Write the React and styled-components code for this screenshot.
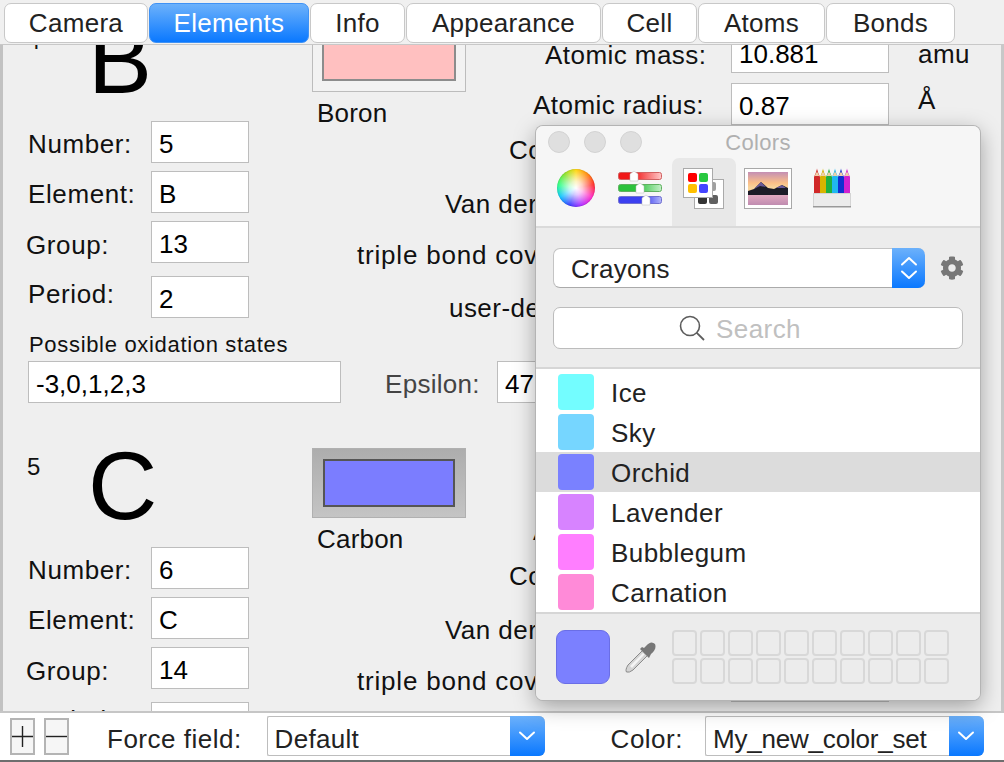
import React from "react"
import styled, {createGlobalStyle} from "styled-components"
import {FaCog} from "react-icons/fa"

const GlobalStyle = createGlobalStyle`
    html, body {
        margin: 0;
        height: 100%;
        overflow: hidden;
        background: #efefef;
    }
    * {
        box-sizing: border-box;
    }
`

const TABS = [
    {name: "Camera", width: 144},
    {name: "Elements", width: 160, active: true},
    {name: "Info", width: 95},
    {name: "Appearance", width: 195},
    {name: "Cell", width: 95},
    {name: "Atoms", width: 127},
    {name: "Bonds", width: 129},
]

const ELEMENTS = [
    {
        index: 4, symbol: "B", name: "Boron", color: "#ffc0c0", number: 5, group: 13, period: 2,
        mass: "10.881", radius: "0.87", oxidation: "-3,0,1,2,3", epsilon: "47.8",
    },
    {
        index: 5, symbol: "C", name: "Carbon", color: "#7b7dff", number: 6, group: 14, period: 2, selected: true,
        mass: "12.011", radius: "0.67", oxidation: "-4,-3,-2,-1,0,1,2,3,4", epsilon: "51.2",
    },
]

const CRAYONS = [
    {name: "Ice", color: "#73fdff"},
    {name: "Sky", color: "#76d6ff"},
    {name: "Orchid", color: "#7a81ff", active: true},
    {name: "Lavender", color: "#d783ff"},
    {name: "Bubblegum", color: "#ff7eff"},
    {name: "Carnation", color: "#ff8ad8"},
]

const Chevron = ({up}) => (
    <svg width="18" height="10" viewBox="0 0 18 10">
        <path d={up ? "M2 8.5 L9 2 L16 8.5" : "M2 1.5 L9 8 L16 1.5"} fill="none" stroke="#fff" strokeWidth="2" strokeLinecap="round" strokeLinejoin="round" />
    </svg>
)

const SlidersIcon = () => (
    <svg width="44" height="38" viewBox="0 0 44 38">
        <defs>
            <linearGradient id="redBar"><stop offset="0.35" stopColor="#f01818" /><stop offset="1" stopColor="#ffc8c8" /></linearGradient>
            <linearGradient id="greenBar"><stop offset="0.45" stopColor="#2cc23c" /><stop offset="1" stopColor="#c4f0c8" /></linearGradient>
            <linearGradient id="blueBar"><stop offset="0.6" stopColor="#3c40f0" /><stop offset="1" stopColor="#b4b8fa" /></linearGradient>
        </defs>
        <rect x="0.5" y="4.5" width="43" height="7" rx="2" fill="url(#redBar)" stroke="#d06060" />
        <rect x="0.5" y="16.5" width="43" height="7" rx="2" fill="url(#greenBar)" stroke="#60b060" />
        <rect x="0.5" y="28.5" width="43" height="7" rx="2" fill="url(#blueBar)" stroke="#7070d0" />
        <path d="M12 6 L16 3 L20 6 V13 H12 Z" fill="#fff" stroke="#bbb" strokeWidth="0.5" />
        <path d="M18 18 L22 15 L26 18 V25 H18 Z" fill="#fff" stroke="#bbb" strokeWidth="0.5" />
        <path d="M24 30 L28 27 L32 30 V37 H24 Z" fill="#fff" stroke="#bbb" strokeWidth="0.5" />
    </svg>
)

const PalettesIcon = () => (
    <svg width="42" height="42" viewBox="0 0 42 42">
        <rect x="11.5" y="11.5" width="29" height="29" fill="#fff" stroke="#aaa" />
        <rect x="24" y="14" width="9" height="9" rx="2" fill="#a0a0a0" />
        <rect x="15" y="27" width="9" height="9" rx="2" fill="#333" />
        <rect x="26" y="27" width="9" height="9" rx="2" fill="#606060" />
        <rect x="0.5" y="0.5" width="29" height="29" fill="#fff" stroke="#aaa" />
        <rect x="5" y="5" width="9" height="9" rx="2" fill="#ff0000" />
        <rect x="16" y="5" width="9" height="9" rx="2" fill="#28c840" />
        <rect x="5" y="16" width="9" height="9" rx="2" fill="#ffc000" />
        <rect x="16" y="16" width="9" height="9" rx="2" fill="#4444ff" />
    </svg>
)

const PictureIcon = () => (
    <svg width="48" height="41" viewBox="0 0 48 41">
        <defs>
            <linearGradient id="sunset" x2="0" y2="1">
                <stop offset="0" stopColor="#c48fb4" />
                <stop offset="0.5" stopColor="#fcc088" />
                <stop offset="0.7" stopColor="#f8d49c" />
            </linearGradient>
            <linearGradient id="lake" x2="0" y2="1">
                <stop offset="0" stopColor="#e0a8c0" />
                <stop offset="1" stopColor="#c08cb0" />
            </linearGradient>
        </defs>
        <rect x="0.5" y="0.5" width="47" height="40" fill="#fff" stroke="#a8a8a8" />
        <rect x="4" y="4" width="40" height="22" fill="url(#sunset)" />
        <rect x="4" y="27" width="40" height="10" fill="url(#lake)" />
        <path d="M4 23 L10 21 L17 14 L24 20 L30 21 L38 17 L44 20 V27 H4 Z" fill="#1c1c28" />
        <path d="M10 21 L17 14 L22 19 L16 18 Z M32 20 L38 17 L42 20 Z" fill="#6a5a98" />
    </svg>
)

const PENCILS = ["#d02828", "#d8b400", "#20b040", "#20b8f0", "#1030d0", "#d020d0"]

const PencilsIcon = () => (
    <svg width="38" height="40" viewBox="0 0 38 40">
        {PENCILS.map((color, i) => (
            <g key={color} transform={`translate(${1 + i * 6} 0)`}>
                <path d="M0 9 L3 2 L6 9 V27 H0 Z" fill={color} />
                <path d="M0.8 8 L3 2.5 L5.2 8 Z" fill="#f0d0a8" />
                <path d="M2.2 4.4 L3 0.5 L3.8 4.4 Z" fill={color} />
            </g>
        ))}
        <rect x="0.5" y="25.5" width="37" height="13" fill="#ebebeb" stroke="#d4d4d4" />
        <rect x="0" y="38" width="38" height="1.5" fill="#999" />
    </svg>
)

const SearchIcon = () => (
    <svg width="26" height="26" viewBox="0 0 26 26">
        <circle cx="11" cy="11" r="9.5" fill="none" stroke="#5c5c5c" strokeWidth="1.6" />
        <path d="M17.8 17.8 L25 25" stroke="#5c5c5c" strokeWidth="1.8" />
    </svg>
)

const DropperIcon = () => (
    <svg width="32" height="32" viewBox="0 0 32 32">
        <path d="M18 9 L23 14 L8 29 Q4 32 1.5 31 Q0 29 3 24 Z" fill="#d4d4d4" stroke="#8a8a8a" />
        <path d="M5 25 L18 12 L19.5 13.5 L7 27 Z" fill="#f4f4f4" />
        <path d="M15 8 L24 17 L26 13 Q32 8 30 3 Q26 -1 21 5 L19 7 L17 6 Z" fill="#777" />
    </svg>
)

const ElementCard = ({element}) => (
    <Card>
        <TopRegion>
            <LeftColumn>
                <Head>
                    <AtomIndex>{element.index}</AtomIndex>
                    <AtomSymbol>{element.symbol}</AtomSymbol>
                </Head>
                <FieldRow>
                    <FieldLabel $down={1}>Number:</FieldLabel>
                    <ShortInput readOnly value={element.number} />
                </FieldRow>
                <FieldRow $top={8}>
                    <FieldLabel>Element:</FieldLabel>
                    <ShortInput readOnly value={element.symbol} />
                </FieldRow>
                <FieldRow $top={8}>
                    <FieldLabel $left={-2} $down={3}>Group:</FieldLabel>
                    <ShortInput readOnly value={element.group} />
                </FieldRow>
                <FieldRow $top={12}>
                    <FieldLabel $down={-8}>Period:</FieldLabel>
                    <ShortInput readOnly value={element.period} />
                </FieldRow>
            </LeftColumn>
            <RightColumn>
                <TopPart>
                    <SwatchBlock>
                        <Swatch $selected={element.selected}>
                            <SwatchFill $color={element.color} $selected={element.selected} />
                        </Swatch>
                        <ElementName>{element.name}</ElementName>
                    </SwatchBlock>
                    <AtomicRows>
                        <ValueRow $labelWidth={265} $indent={79} $drop={7}>
                            <span>Atomic mass:</span>
                            <ValueInput readOnly value={element.mass} />
                            <Unit>amu</Unit>
                        </ValueRow>
                        <ValueRow $labelWidth={265} $indent={67} $top={10} $drop={3}>
                            <span>Atomic radius:</span>
                            <ValueInput readOnly value={element.radius} />
                            <Unit $raised>Å</Unit>
                        </ValueRow>
                    </AtomicRows>
                </TopPart>
                <ValueRow $labelWidth={419} $indent={197} $top={4} $drop={1}>
                    <span>Covalent radius:</span>
                    <ValueInput readOnly value="0.82" />
                </ValueRow>
                <ValueRow $labelWidth={419} $indent={133} $top={12} $drop={1}>
                    <span>Van der Waals radius:</span>
                    <ValueInput readOnly value="1.92" />
                </ValueRow>
                <ValueRow $labelWidth={419} $indent={45} $top={9} $spacing={0.8} $drop={1}>
                    <span>triple bond covalent radius:</span>
                    <ValueInput readOnly value="0.73" />
                </ValueRow>
                <ValueRow $labelWidth={419} $indent={137} $top={11} $drop={1}>
                    <span>user-defined radius:</span>
                    <ValueInput readOnly value="0.87" />
                </ValueRow>
            </RightColumn>
        </TopRegion>
        <BottomRegion>
            <OxidationBlock>
                <OxidationLabel>Possible oxidation states</OxidationLabel>
                <OxidationInput readOnly value={element.oxidation} />
            </OxidationBlock>
            <EpsilonLabel>Epsilon:</EpsilonLabel>
            <ValueInput readOnly value={element.epsilon} />
        </BottomRegion>
    </Card>
)

const ColorsPanel = () => (
    <Panel>
        <TitleBar>
            <Lights>
                <Light />
                <Light />
                <Light />
            </Lights>
            <PanelTitle>Colors</PanelTitle>
        </TitleBar>
        <Toolbar>
            <ToolSlot $width={80}><ColorWheel /></ToolSlot>
            <ToolSlot $width={56} $right={8}><SlidersIcon /></ToolSlot>
            <ToolSlot $width={64} $active><PalettesIcon /></ToolSlot>
            <ToolSlot $width={72} $right={8}><PictureIcon /></ToolSlot>
            <ToolSlot $width={48}><PencilsIcon /></ToolSlot>
        </Toolbar>
        <Controls>
            <PaletteRow>
                <PaletteSelect>
                    <PaletteName>Crayons</PaletteName>
                    <StepperCap>
                        <Chevron up />
                        <Chevron />
                    </StepperCap>
                </PaletteSelect>
                <GearSlot><FaCog size={24} /></GearSlot>
            </PaletteRow>
            <SearchBox>
                <SearchIcon />
                <SearchText>Search</SearchText>
            </SearchBox>
        </Controls>
        <ColorList>
            {CRAYONS.map(crayon => (
                <ColorRow key={crayon.name} $active={crayon.active}>
                    <ColorChip $color={crayon.color} />
                    <ColorName>{crayon.name}</ColorName>
                </ColorRow>
            ))}
        </ColorList>
        <PanelFooter>
            <CurrentColor />
            <DropperSlot><DropperIcon /></DropperSlot>
            <SavedGrid>
                {[...Array(20)].map((x, i) => <SavedCell key={i} />)}
            </SavedGrid>
        </PanelFooter>
    </Panel>
)

const App = () => {
    return (
        <Page>
            <GlobalStyle />
            <TabBar>
                {TABS.map(tab => (
                    <Tab key={tab.name} $width={tab.width} $active={tab.active}>{tab.name}</Tab>
                ))}
            </TabBar>
            <ScrollArea>
                <ScrollContent>
                    {ELEMENTS.map(element => <ElementCard key={element.symbol} element={element} />)}
                </ScrollContent>
            </ScrollArea>
            <BottomBar>
                <SquareButton>
                    <svg width="21" height="21" viewBox="0 0 21 21"><path d="M0 10.5 H21 M10.5 0 V21" stroke="#222" strokeWidth="1.4" /></svg>
                </SquareButton>
                <SquareButton $left={9}>
                    <svg width="21" height="21" viewBox="0 0 21 21"><path d="M0 10.5 H21" stroke="#222" strokeWidth="1.4" /></svg>
                </SquareButton>
                <BarLabel $left={38}>Force field:</BarLabel>
                <BarSelect $left={25} $width={278}>
                    <SelectText>Default</SelectText>
                    <SelectCap><Chevron /></SelectCap>
                </BarSelect>
                <BarLabel $left={66}>Color:</BarLabel>
                <BarSelect $left={22} $width={279}>
                    <SelectText $tight>My_new_color_set</SelectText>
                    <SelectCap><Chevron /></SelectCap>
                </BarSelect>
            </BottomBar>
            <ColorsPanel />
        </Page>
    )
}

const Page = styled.div`
    position: relative;
    width: 1004px;
    height: 762px;
    display: flex;
    flex-direction: column;
    overflow: hidden;
    font-family: "Liberation Sans", Arial, sans-serif;
    font-size: 26px;
    color: #111;
    background: #efefef;
`

const TabBar = styled.div`
    height: 45px;
    flex-shrink: 0;
    display: flex;
    gap: 1px;
    padding: 3px 0 1px 4px;
    background: #f0f0f0;
    border-bottom: 1px solid #c8c8c8;
`

const Tab = styled.div`
    width: ${props => props.$width}px;
    height: 40px;
    display: flex;
    align-items: center;
    justify-content: center;
    border-radius: 7px;
    letter-spacing: 0.3px;
    color: ${props => props.$active ? "#fff" : "#222"};
    background: ${props => props.$active ? "linear-gradient(#6cb1fb, #0a78ff)" : "#fff"};
    border: 1px solid ${props => props.$active ? "#3f92f5" : "#c8c8c8"};
`

const ScrollArea = styled.div`
    flex: 1;
    min-height: 0;
    overflow: hidden;
    border-left: 3px solid #c2c2c2;
    border-right: 3px solid #c8c8c8;
`

const ScrollContent = styled.div`
    margin-top: -31px;
`

const Card = styled.div`
    height: 426px;
    padding-left: 25px;
`

const TopRegion = styled.div`
    height: 317px;
    display: flex;
`

const LeftColumn = styled.div`
    width: 284px;
    flex-shrink: 0;
`

const Head = styled.div`
    height: 107px;
    display: flex;
    align-items: flex-start;
`

const AtomIndex = styled.div`
    width: 61px;
    line-height: 54px;
    font-size: 24px;
    margin-left: -1px;
`

const AtomSymbol = styled.div`
    font-size: 96px;
    line-height: 96px;
    margin-top: -2px;
    color: #000;
`

const FieldRow = styled.div`
    display: flex;
    align-items: center;
    margin-top: ${props => props.$top || 0}px;
`

const FieldLabel = styled.div`
    width: 123px;
    letter-spacing: 0.6px;
    margin-left: ${props => props.$left || 0}px;
    margin-right: ${props => -(props.$left || 0)}px;
    padding-top: ${props => 4 + Math.max(props.$down || 0, 0)}px;
    padding-bottom: ${props => Math.max(-(props.$down || 0), 0)}px;
`

const TextInput = styled.input`
    height: 42px;
    padding: 5px 0 0 7px;
    font-family: inherit;
    font-size: 26px;
    color: #000;
    background: #fff;
    border: 1px solid #bdbdbd;
    border-radius: 0;
    outline: none;
`

const ShortInput = styled(TextInput)`
    width: 98px;
`

const ValueInput = styled(TextInput)`
    width: 158px;
`

const OxidationInput = styled(TextInput)`
    width: 313px;
    margin-top: 5px;
`

const RightColumn = styled.div`
    flex: 1;
    min-width: 0;
`

const TopPart = styled.div`
    height: 111px;
    display: flex;
`

const SwatchBlock = styled.div`
    width: 154px;
    flex-shrink: 0;
    padding-top: 8px;
`

const Swatch = styled.div`
    width: 154px;
    height: 70px;
    padding: 10px ${props => props.$selected ? 10 : 9}px;
    border: 1px solid ${props => props.$selected ? "#b0b0b0" : "#bcbcbc"};
    background: ${props => props.$selected ? "linear-gradient(#adadad, #c4c4c4)" : "#f2f2f2"};
`

const SwatchFill = styled.div`
    height: 100%;
    background: ${props => props.$color};
    border: 2px solid ${props => props.$selected ? "#555" : "#8c8c8c"};
`

const ElementName = styled.div`
    margin-top: 6px;
    padding-left: 5px;
    line-height: 30px;
    letter-spacing: 0.2px;
`

const AtomicRows = styled.div`
    padding-top: 17px;
`

const ValueRow = styled.div`
    display: grid;
    grid-template-columns: ${props => props.$labelWidth}px 158px auto;
    align-items: center;
    margin-top: ${props => props.$top || 0}px;
    white-space: nowrap;
    letter-spacing: ${props => props.$spacing || 0.45}px;

    & > span {
        padding-left: ${props => props.$indent}px;
        padding-top: ${props => props.$drop}px;
    }
`

const Unit = styled.div`
    padding-left: 29px;
    padding-top: ${props => props.$raised ? 0 : 4}px;
    padding-bottom: ${props => props.$raised ? 8 : 0}px;
`

const BottomRegion = styled.div`
    display: flex;
    align-items: flex-end;
`

const OxidationBlock = styled.div`
    width: 313px;
    flex-shrink: 0;
`

const OxidationLabel = styled.div`
    height: 25px;
    line-height: 25px;
    font-size: 22px;
    letter-spacing: 0.68px;
    padding: 1px 0 0 1px;
`

const EpsilonLabel = styled.div`
    width: 112px;
    margin-left: 44px;
    margin-bottom: -2px;
    line-height: 42px;
    color: #444;
    letter-spacing: 0.3px;
`

const BottomBar = styled.div`
    height: 51px;
    flex-shrink: 0;
    display: flex;
    align-items: flex-start;
    padding: 3px 0 0 10px;
    background: #fff;
    border-top: 2px solid #c6c6c6;
    border-bottom: 2px solid #6e6e6e;
    color: #222;
`

const SquareButton = styled.div`
    width: 25px;
    height: 37px;
    margin-top: 2px;
    margin-left: ${props => props.$left || 0}px;
    display: flex;
    align-items: center;
    justify-content: center;
    background: #f6f6f6;
    border: 2px solid #b4b4b4;
`

const BarLabel = styled.div`
    margin-left: ${props => props.$left}px;
    line-height: 40px;
    padding-top: 3px;
    letter-spacing: 0.5px;
`

const BarSelect = styled.div`
    width: ${props => props.$width}px;
    height: 40px;
    margin-left: ${props => props.$left}px;
    display: flex;
    align-items: center;
    justify-content: space-between;
    padding-left: 7px;
    border: 1px solid #bdbdbd;
    border-right: none;
    border-radius: 2px 6px 6px 2px;
    background: #fff;
`

const SelectText = styled.span`
    padding-top: 6px;
    letter-spacing: ${props => props.$tight ? -0.2 : 0.3}px;
`

const SelectCap = styled.div`
    width: 35px;
    height: 40px;
    display: flex;
    align-items: center;
    justify-content: center;
    background: linear-gradient(#6cb1fb, #0a78ff);
    border-radius: 0 6px 6px 0;
`

const Panel = styled.div`
    position: absolute;
    left: 536px;
    top: 126px;
    width: 444px;
    height: 574px;
    display: flex;
    flex-direction: column;
    overflow: hidden;
    border-radius: 7px;
    background: #ececec;
    box-shadow: 0 0 0 1px #b4b4b4, 0 6px 22px rgba(0, 0, 0, 0.35);
    color: #222;
`

const TitleBar = styled.div`
    position: relative;
    height: 32px;
    flex-shrink: 0;
    display: flex;
    align-items: center;
    justify-content: center;
    background: #f6f6f6;
`

const Lights = styled.div`
    position: absolute;
    left: 12px;
    top: 5px;
    display: flex;
    gap: 14px;
`

const Light = styled.div`
    width: 22px;
    height: 22px;
    border-radius: 50%;
    background: #dfdfdf;
    border: 1px solid #d2d2d2;
`

const PanelTitle = styled.div`
    font-size: 22px;
    letter-spacing: 0.3px;
    color: #b0b0b0;
    padding-top: 2px;
`

const Toolbar = styled.div`
    height: 70px;
    flex-shrink: 0;
    display: flex;
    background: #f6f6f6;
    border-bottom: 2px solid #dadada;
`

const ToolSlot = styled.div`
    width: ${props => props.$width}px;
    display: flex;
    justify-content: center;
    align-items: flex-start;
    padding-top: 10px;
    padding-right: ${props => props.$right || 0}px;
    border-radius: 7px 7px 0 0;
    background: ${props => props.$active ? "#e8e8e8" : "transparent"};
`

const ColorWheel = styled.div`
    width: 38px;
    height: 38px;
    margin-top: 1px;
    border-radius: 50%;
    background:
        radial-gradient(circle, #fff 0%, rgba(255, 255, 255, 0.75) 25%, rgba(255, 255, 255, 0) 72%),
        conic-gradient(#ffd400, #ff8000, #ff2020, #ff20c0, #b020ff, #3030ff, #00c0ff, #20ff80, #80e020, #ffd400);
    box-shadow: inset 0 0 1px rgba(0, 0, 0, 0.4);
`

const Controls = styled.div`
    height: 141px;
    flex-shrink: 0;
    padding: 20px 17px 0;
    background: #ececec;
    border-bottom: 2px solid #d6d6d6;
`

const PaletteRow = styled.div`
    display: flex;
    align-items: center;
`

const PaletteSelect = styled.div`
    width: 372px;
    height: 40px;
    flex-shrink: 0;
    display: flex;
    align-items: center;
    justify-content: space-between;
    padding-left: 17px;
    background: #fff;
    border: 1px solid #c4c4c4;
    border-bottom-color: #aaa;
    border-right: none;
    border-radius: 7px;
    letter-spacing: 0.3px;
`

const PaletteName = styled.span`
    color: #222;
    padding-top: 3px;
`

const StepperCap = styled.div`
    width: 33px;
    height: 40px;
    margin-top: -1px;
    display: flex;
    flex-direction: column;
    align-items: center;
    justify-content: center;
    gap: 4px;
    background: linear-gradient(#6cb1fb, #0a78ff);
    border-radius: 0 7px 7px 0;
`

const GearSlot = styled.div`
    width: 54px;
    flex-shrink: 0;
    display: flex;
    justify-content: center;
    color: #777;
`

const SearchBox = styled.div`
    width: 410px;
    height: 42px;
    margin-top: 19px;
    display: flex;
    align-items: center;
    justify-content: center;
    gap: 11px;
    padding-right: 36px;
    background: #fff;
    border: 1px solid #bcbcbc;
    border-radius: 7px;
`

const SearchText = styled.span`
    color: #c0c0c0;
    letter-spacing: 0.4px;
    padding-top: 3px;
`

const ColorList = styled.div`
    height: 243px;
    flex-shrink: 0;
    padding-top: 3px;
    overflow: hidden;
    background: #fff;
`

const ColorRow = styled.div`
    height: 40px;
    display: flex;
    align-items: center;
    gap: 17px;
    padding-left: 22px;
    letter-spacing: 0.45px;
    background: ${props => props.$active ? "#dcdcdc" : "transparent"};
`

const ColorName = styled.span`
    padding-top: 2px;
`

const ColorChip = styled.div`
    width: 36px;
    height: 36px;
    border-radius: 4px;
    background: ${props => props.$color};
`

const PanelFooter = styled.div`
    flex: 1;
    display: flex;
    align-items: flex-start;
    padding: 16px 0 0 20px;
    background: #ececec;
    border-top: 2px solid #d6d6d6;
`

const CurrentColor = styled.div`
    width: 54px;
    height: 54px;
    border-radius: 9px;
    background: #7b80ff;
    border: 1px solid #6a6ee6;
`

const DropperSlot = styled.div`
    width: 62px;
    display: flex;
    justify-content: center;
    padding-top: 11px;
`

const SavedGrid = styled.div`
    display: grid;
    grid-template-columns: repeat(10, 25px);
    grid-auto-rows: 26px;
    gap: 2px 3px;
`

const SavedCell = styled.div`
    border: 2px solid #d8d8d8;
    border-radius: 4px;
`

export default App
